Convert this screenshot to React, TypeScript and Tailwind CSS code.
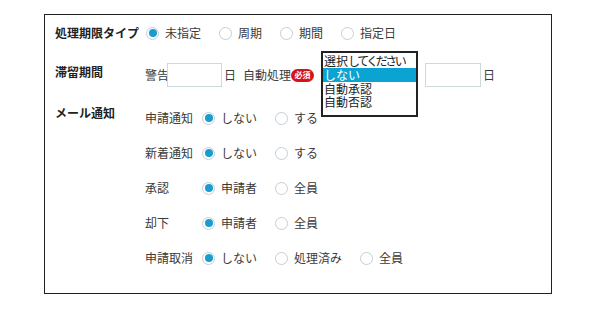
import React from "react";

function Radio({ checked, label }: { checked?: boolean; label: string }) {
  return (
    <span className="flex items-center gap-[6px]">
      <span className="flex h-[13px] w-[13px] items-center justify-center rounded-full border border-[#c3cfd5] bg-white">
        {checked && <span className="h-[8px] w-[8px] rounded-full bg-[#1a9cce]" />}
      </span>
      <span>{label}</span>
    </span>
  );
}

function SubRow({ label, items }: { label: string; items: [string, boolean][] }) {
  return (
    <div className="flex h-[24px] items-center">
      <span className="w-[57px]">{label}</span>
      <div className="flex items-center gap-[18px]">
        {items.map(([t, c]) => (
          <Radio key={t} label={t} checked={c} />
        ))}
      </div>
    </div>
  );
}

export default function App() {
  return (
    <div
      className="h-[310px] w-[600px] bg-white text-[12px] text-[#3a3a3a]"
      style={{ fontFamily: '"Noto Sans CJK JP", "Noto Sans", sans-serif' }}
    >
      <div className="ml-[44px] pt-[14px]">
        <div className="flex h-[280px] w-[508px] flex-col border border-[#231f20] pl-[10px] pt-[6px]">
          {/* Row 1 */}
          <div className="flex h-[24px] items-center">
            <span className="w-[91px] font-bold text-[#222]">処理期限タイプ</span>
            <div className="flex items-center gap-[18px]">
              <Radio checked label="未指定" />
              <Radio label="周期" />
              <Radio label="期間" />
              <Radio label="指定日" />
            </div>
          </div>

          {/* Row 2 */}
          <div className="mt-[18px] flex items-start">
            <span className="w-[90px] font-bold leading-[18px] text-[#222]">滞留期間</span>
            <div className="flex h-[24px] items-center">
              <span>警告</span>
              <span className="-ml-[2px] h-[24px] w-[55px] border border-[#cfd9dc] bg-white" />
              <span className="ml-[2px]">日</span>
              <span className="ml-[7px]">自動処理</span>
              <span className="flex h-[13px] w-[23px] items-center justify-center rounded-full bg-[#d2141c] text-[8px] font-bold leading-none text-white">
                必須
              </span>
              <span className="relative ml-[7px] h-[24px] w-[97px]">
                <div className="absolute left-0 top-[-12px] h-[66px] w-[97px] border-2 border-[#222] bg-white pt-[1px] text-[12px] leading-[13px] text-[#222]">
                  <div className="h-[14px] whitespace-nowrap pl-[1px]">
                    選択<span className="tracking-[-2.5px]">してください</span>
                  </div>
                  <div className="h-[14px] bg-[#0aa3d2] pl-[1px] text-white">しない</div>
                  <div className="h-[13px] pl-[1px]">自動承認</div>
                  <div className="h-[13px] pl-[1px]">自動否認</div>
                </div>
              </span>
              <span className="ml-[7px] h-[24px] w-[56px] border border-[#cfd9dc] bg-white" />
              <span className="ml-[2px]">日</span>
            </div>
          </div>

          {/* Row 3 */}
          <div className="mt-[19px] flex items-start">
            <span className="mt-[-2px] w-[90px] font-bold leading-[18px] text-[#222]">メール通知</span>
            <div className="flex flex-col gap-[11px]">
              <SubRow label="申請通知" items={[["しない", true], ["する", false]]} />
              <SubRow label="新着通知" items={[["しない", true], ["する", false]]} />
              <SubRow label="承認" items={[["申請者", true], ["全員", false]]} />
              <SubRow label="却下" items={[["申請者", true], ["全員", false]]} />
              <SubRow
                label="申請取消"
                items={[["しない", true], ["処理済み", false], ["全員", false]]}
              />
            </div>
          </div>
        </div>
      </div>
    </div>
  );
}
